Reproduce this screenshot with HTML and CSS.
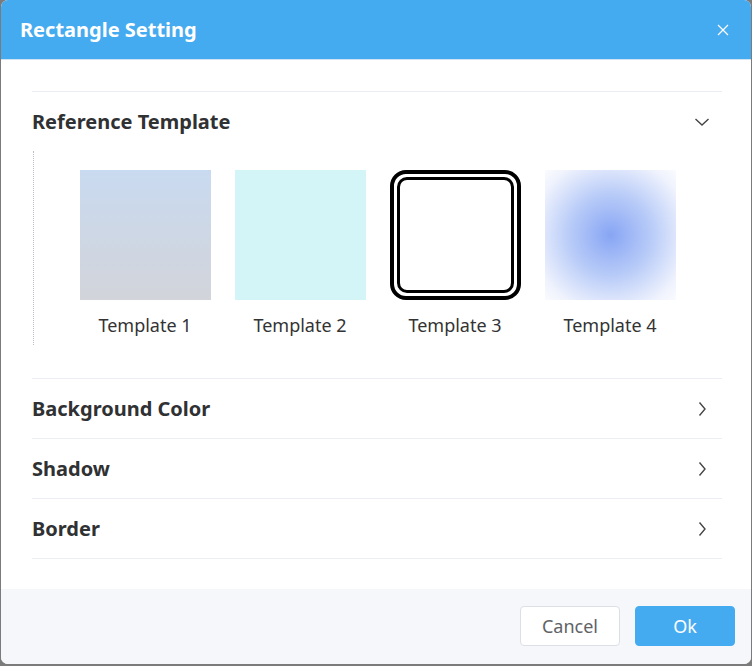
FILE: index.html
```html
<!DOCTYPE html>
<html>
<head>
<meta charset="utf-8">
<link rel="stylesheet" href="styles.css">
</head>
<body>
<div class="dialog">
  <div class="header">
    <span class="title">Rectangle Setting</span>
    <span class="close"><svg width="12" height="12" viewBox="0 0 12 12"><path d="M1 1L11 11M11 1L1 11" stroke="#fff" stroke-width="1.2" fill="none"/></svg></span>
  </div>
  <div class="content">
    <div class="section open">
      <div class="row">
        <span class="label">Reference Template</span>
        <svg class="chev" width="16" height="10" viewBox="0 0 16 10"><path d="M1.5 2L8 8L14.5 2" stroke="#444" stroke-width="1.4" fill="none"/></svg>
      </div>
      <div class="templates">
        <div class="tpl"><div class="thumb t1"></div><div class="name">Template 1</div></div>
        <div class="tpl"><div class="thumb t2"></div><div class="name">Template 2</div></div>
        <div class="tpl"><div class="thumb t3"><div class="inner"></div></div><div class="name">Template 3</div></div>
        <div class="tpl"><div class="thumb t4"></div><div class="name">Template 4</div></div>
      </div>
    </div>
    <div class="section">
      <div class="row">
        <span class="label">Background Color</span>
        <svg class="chev right" width="10" height="16" viewBox="0 0 10 16"><path d="M2.5 1.5L8 8L2.5 14.5" stroke="#444" stroke-width="1.4" fill="none"/></svg>
      </div>
    </div>
    <div class="section">
      <div class="row">
        <span class="label">Shadow</span>
        <svg class="chev right" width="10" height="16" viewBox="0 0 10 16"><path d="M2.5 1.5L8 8L2.5 14.5" stroke="#444" stroke-width="1.4" fill="none"/></svg>
      </div>
    </div>
    <div class="section last">
      <div class="row">
        <span class="label">Border</span>
        <svg class="chev right" width="10" height="16" viewBox="0 0 10 16"><path d="M2.5 1.5L8 8L2.5 14.5" stroke="#444" stroke-width="1.4" fill="none"/></svg>
      </div>
    </div>
  </div>
  <div class="footer">
    <button class="btn cancel">Cancel</button>
    <button class="btn ok">Ok</button>
  </div>
</div>
</body>
</html>
```
FILE: styles.css
```css
html, body {
  margin: 0;
  padding: 0;
  background: #7b7b7b;
  width: 752px;
  height: 666px;
  overflow: hidden;
}
body {
  font-family: "Noto Sans", "Open Sans", sans-serif;
}
.dialog {
  width: 750px;
  height: 664px;
  margin-left: 1px;
  background: #fff;
  border-radius: 7px;
  overflow: hidden;
  display: flex;
  flex-direction: column;
}
.header {
  height: 60px;
  background: #45abf0;
  border-bottom: 1px solid #cfe3f2;
  box-sizing: border-box;
  display: flex;
  align-items: center;
  justify-content: space-between;
  padding: 0 22px 0 19px;
}
.title {
  color: #fff;
  font-size: 20px;
  font-weight: 700;
}
.close {
  display: flex;
  align-items: center;
}
.content {
  flex: 1;
  padding: 31px 29px 0 31px;
}
.section {
  border-top: 1px solid #ebeef5;
}
.section.last {
  border-bottom: 1px solid #ebeef5;
}
.row {
  height: 59px;
  display: flex;
  align-items: center;
  justify-content: space-between;
  padding-right: 12px;
}
.chev.right {
  margin-right: 3px;
}
.label {
  font-size: 20px;
  font-weight: 700;
  color: #303133;
}
.templates {
  margin-left: 1px;
  border-left: 1px dotted #b9bcc2;
  height: 194px;
  margin-bottom: 33px;
  padding: 19px 0 0 45px;
  box-sizing: border-box;
  display: flex;
  gap: 23px;
}
.tpl {
  width: 132px;
  display: flex;
  flex-direction: column;
  align-items: center;
}
.thumb {
  width: 131px;
  height: 130px;
  box-sizing: border-box;
}
.t1 {
  background: linear-gradient(#c9daf0, #d2d4da);
}
.t2 {
  background: #d4f5f8;
}
.t3 {
  border: 4px solid #000;
  border-radius: 16px;
  padding: 3px;
  background: #fff;
}
.t3 .inner {
  height: 100%;
  border: 3px solid #000;
  border-radius: 10px;
  box-sizing: border-box;
}
.t4 {
  background: radial-gradient(circle at center, #87a5f4 0%, #b9ccf8 45%, #f0f3fd 85%, #fafbfe 100%);
}
.name {
  margin-top: 13px;
  font-size: 18px;
  color: #333;
  line-height: 24px;
}
.footer {
  height: 75px;
  background: #f5f7fa;
  display: flex;
  justify-content: flex-end;
  align-items: center;
  gap: 15px;
  padding: 0 16px 2px 0;
  box-sizing: border-box;
}
.btn {
  width: 100px;
  height: 40px;
  border-radius: 4px;
  font-family: "Noto Sans", "Open Sans", sans-serif;
  font-size: 18px;
  cursor: pointer;
}
.cancel {
  background: #fff;
  border: 1px solid #dcdfe6;
  color: #606266;
}
.ok {
  background: #45abf0;
  border: 1px solid #45abf0;
  color: #fff;
}
```
